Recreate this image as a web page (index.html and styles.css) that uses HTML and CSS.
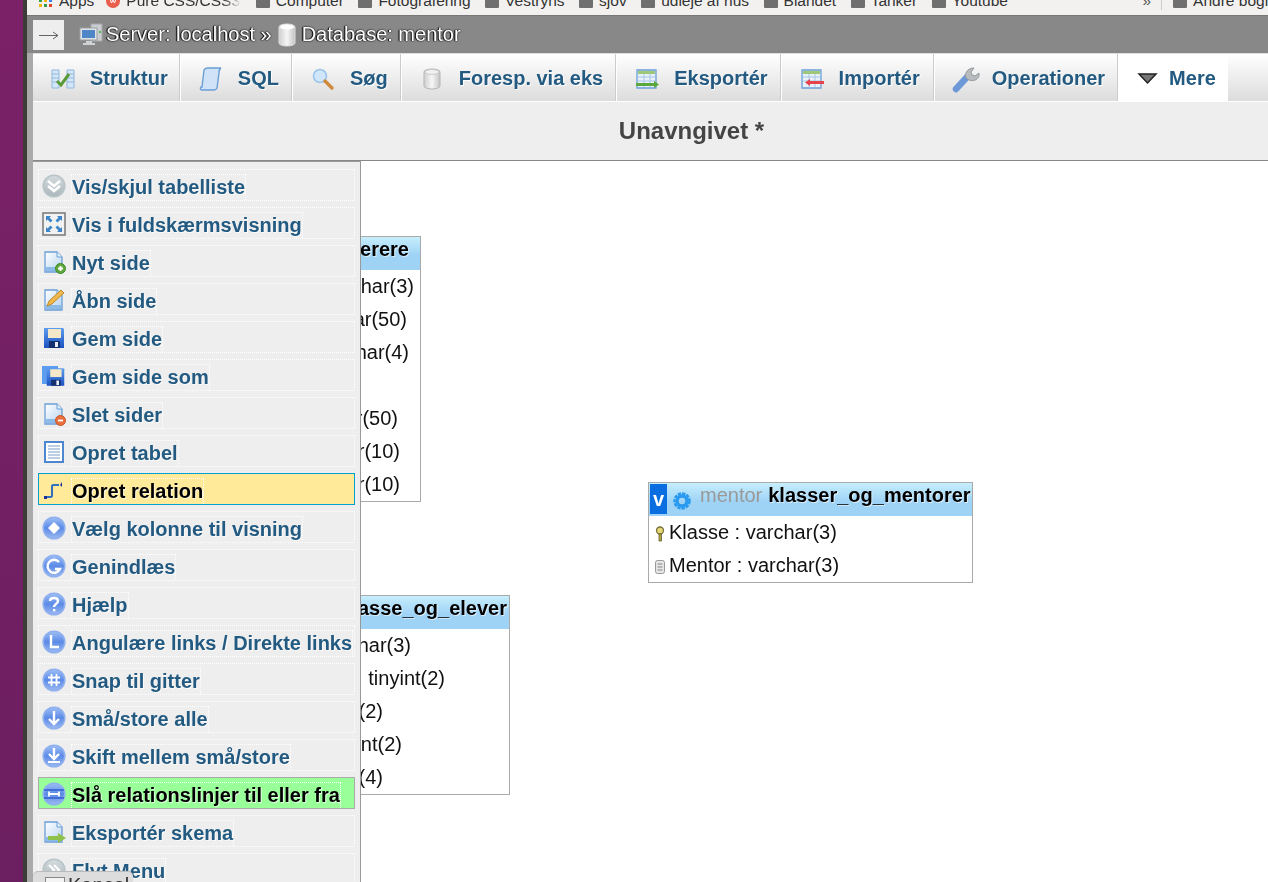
FILE: index.html
```html
<!DOCTYPE html>
<html lang="da">

<head>
    <meta charset="UTF-8">
    <meta name="viewport" content="width=device-width, initial-scale=1.0">
    <title>Designer - mentor</title>
    <link rel="stylesheet" href="styles.css">
</head>

<body>
    <svg class="defs" aria-hidden="true">
        <defs>
            <linearGradient id="g-blue" x1="0" y1="0" x2="0" y2="1">
                <stop offset="0" stop-color="#9fc0f5" />
                <stop offset="0.5" stop-color="#5b8ae6" />
                <stop offset="1" stop-color="#9db9f2" />
            </linearGradient>
            <linearGradient id="g-gray" x1="0" y1="0" x2="0" y2="1">
                <stop offset="0" stop-color="#d5dcdf" />
                <stop offset="1" stop-color="#a9b6bb" />
            </linearGradient>
            <linearGradient id="g-page" x1="0" y1="0" x2="1" y2="1">
                <stop offset="0" stop-color="#ffffff" />
                <stop offset="1" stop-color="#b4d2f0" />
            </linearGradient>
            <linearGradient id="g-disk" x1="0" y1="0" x2="0" y2="1">
                <stop offset="0" stop-color="#5d9df0" />
                <stop offset="1" stop-color="#1a50c0" />
            </linearGradient>
            <linearGradient id="g-can" x1="0" y1="0" x2="1" y2="0">
                <stop offset="0" stop-color="#cfcfcf" />
                <stop offset="0.5" stop-color="#f6f6f6" />
                <stop offset="1" stop-color="#c4c4c4" />
            </linearGradient>
            <symbol id="round-blue" viewBox="0 0 24 24">
                <circle cx="12" cy="12" r="10.8" fill="url(#g-blue)" stroke="#8fb0ee" stroke-width="1.6" />
            </symbol>
            <symbol id="round-gray" viewBox="0 0 24 24">
                <circle cx="12" cy="12" r="10.8" fill="url(#g-gray)" stroke="#b9c4c8" stroke-width="1.6" />
            </symbol>
            <symbol id="page" viewBox="0 0 24 24">
                <path d="M3 2h12l5 5v15H3z" fill="url(#g-page)" stroke="#6b9fd8" stroke-width="1.3" />
                <path d="M15 2v5h5" fill="#e8f2fb" stroke="#6b9fd8" />
                <path d="M4 17h15v4H4z" fill="#8dbbe8" />
            </symbol>
            <symbol id="disk" viewBox="0 0 24 24">
                <path d="M2 2h19l1 1v19H2z" fill="url(#g-disk)" />
                <path d="M6 3h13v9H6z" fill="#f5e8c8" />
                <path d="M7 15h11v7H7z" fill="#16306e" />
                <path d="M13 16h3v5h-3z" fill="#e8eef8" />
            </symbol>
        </defs>
    </svg>

    <div class="screen">
        <div class="wallpaper"></div>
        <div class="window">
            <div class="bookmarks">
                <span class="mark mark-apps">
                    <svg class="mark-icon" viewBox="0 0 14 14">
                        <path d="M0 0h3v3H0z" fill="#e0442f" />
                        <path d="M5 0h3v3H5z" fill="#3b82ea" />
                        <path d="M10 0h3v3h-3z" fill="#e0442f" />
                        <path d="M0 5h3v3H0z" fill="#2f9e4f" />
                        <path d="M5 5h3v3H5z" fill="#f2b50f" />
                        <path d="M10 5h3v3h-3z" fill="#3b82ea" />
                        <path d="M0 10h3v3H0z" fill="#f2b50f" />
                        <path d="M5 10h3v3H5z" fill="#2f9e4f" />
                        <path d="M10 10h3v3h-3z" fill="#e0442f" />
                    </svg>Apps</span>
                <span class="mark mark-pure">
                    <svg class="mark-icon" viewBox="0 0 14 14">
                        <circle cx="7" cy="7" r="7" fill="#e8604c" />
                        <path d="M4 5l1.500 4L7 6l1.500 3L10 5" fill="none" stroke="#fff" />
                    </svg><span class="mark-fade">Pure CSS/CSS3 O</span></span>
                <span class="mark"><i class="folder"></i>Computer</span>
                <span class="mark"><i class="folder"></i>Fotografering</span>
                <span class="mark"><i class="folder"></i>Vestryns</span>
                <span class="mark"><i class="folder"></i>sjov</span>
                <span class="mark"><i class="folder"></i>udleje af hus</span>
                <span class="mark"><i class="folder"></i>Blandet</span>
                <span class="mark"><i class="folder"></i>Tanker</span>
                <span class="mark"><i class="folder"></i>Youtube</span>
                <span class="mark-more">»</span>
                <span class="mark mark-other"><i class="folder"></i>Andre bogmærker</span>
            </div>

            <div class="page">
                <div class="collapse-strip"></div>
                <div class="content">
                    <div class="serverbar">
                        <span class="arrow-box">
                            <svg class="arrow-icon" viewBox="0 0 31 30">
                                <path d="M6 15.500h19M20 12l5 3.500-5 3.500" fill="none" stroke="#666" />
                            </svg>
                        </span>
                        <svg class="server-icon" viewBox="0 0 24 24">
                            <path d="M12 1h11v17H12z" fill="#c9cdd0" stroke="#a5a9ad" />
                            <path d="M1 5h17v12H1z" fill="#dfe3e6" stroke="#9a9fa3" />
                            <path d="M3 7h13v8H3z" fill="#4f86c8" />
                            <path d="M7 18h6v2h3v2H4v-2h3z" fill="#d0d3d6" />
                            <path d="M20 8h2v2h-2z" fill="#58b858" />
                        </svg>
                        <span class="crumb">Server: localhost »</span>
                        <svg class="crumb-db" viewBox="0 0 18 24">
                            <path d="M1 4c0-4 16-4 16 0v16c0 4-16 4-16 0z" fill="url(#g-can)" stroke="#ddd" />
                            <ellipse cx="9" cy="4" rx="7" ry="2.4" fill="#fff" />
                        </svg>
                        <span class="crumb">Database: mentor</span>
                    </div>

                    <nav class="tabs">
                        <a class="tab">
                            <svg class="tab-icon" viewBox="0 0 24 24">
                                <path d="M1 3h7v18H1zM16 3h7v18h-7z" fill="#d5e6f6" stroke="#8fb8e0" />
                                <path d="M1 7h7M1 11h7M1 15h7M16 7h7M16 11h7M16 15h7" stroke="#8fb8e0" />
                                <path d="M6 14l4 4 8-11" fill="none" stroke="#5a9a38" stroke-width="3" />
                            </svg>Struktur</a>
                        <a class="tab">
                            <svg class="tab-icon" viewBox="0 0 24 24">
                                <path d="M5 3c1-2 3-2 4-2h13c-2 1-2 3-2 5l-2 15c-1 2-2 2-3 2H3c-2 0-2-2-1-3h1z" fill="#cfe2f7" stroke="#6b9fd8" stroke-width="1.4" />
                            </svg>SQL</a>
                        <a class="tab">
                            <svg class="tab-icon" viewBox="0 0 24 24">
                                <circle cx="9" cy="9" r="6.500" fill="#cfe6fb" stroke="#9cc3e8" stroke-width="1.6" />
                                <path d="M14 14l7 7" stroke="#d08a3c" stroke-width="3.4" stroke-linecap="round" />
                            </svg>Søg</a>
                        <a class="tab">
                            <svg class="tab-icon" viewBox="0 0 24 24">
                                <path d="M4 5c0-4 16-4 16 0v14c0 4-16 4-16 0z" fill="url(#g-can)" stroke="#b5b5b5" />
                                <ellipse cx="12" cy="5" rx="7" ry="2.4" fill="#f2f2f2" stroke="#c8c8c8" />
                            </svg>Foresp. via eks</a>
                        <a class="tab">
                            <svg class="tab-icon" viewBox="0 0 24 24">
                                <path d="M2 3h19v18H2z" fill="#e8f1fa" stroke="#6b9fd8" stroke-width="1.3" />
                                <path d="M3 4h17v3H3z" fill="#9cc878" />
                                <path d="M3 10h17M3 14h17M9 7v13M15 7v13" stroke="#a9c6e4" />
                                <path d="M1 16h18v-2l5 3.500-5 3.500v-2H1z" fill="#5aa83c" />
                            </svg>Eksportér</a>
                        <a class="tab tab-wide">
                            <svg class="tab-icon" viewBox="0 0 24 24">
                                <path d="M2 3h19v18H2z" fill="#e8f1fa" stroke="#6b9fd8" stroke-width="1.3" />
                                <path d="M3 4h17v3H3z" fill="#9cc878" />
                                <path d="M3 10h17M3 14h17M9 7v13M15 7v13" stroke="#a9c6e4" />
                                <path d="M24 14H10v-2l-5 3.500 5 3.500v-2h14z" fill="#e8434c" />
                            </svg>Importér</a>
                        <a class="tab">
                            <svg class="tab-icon" viewBox="0 0 24 24">
                                <path d="M3 22L15 9" stroke="#6c98d8" stroke-width="6.500" stroke-linecap="round" />
                                <path d="M13 11c-2-5 2-10 8-10l-3 4 1 3 3 1 4-3c1 6-5 9-10 7z" fill="#b8bcbf" stroke="#97999b" />
                            </svg>Operationer</a>
                        <a class="tab tab-more">
                            <svg class="tab-icon" viewBox="0 0 24 24">
                                <path d="M2 7h17l-8.500 9z" fill="#777" stroke="#222" stroke-width="1.500" />
                            </svg>Mere</a>
                    </nav>

                    <h1 class="page-title">Unavngivet *</h1>

                    <div class="canvas">
                        <section class="db-table table-teachers">
                            <header class="db-head">
                                <span class="db-v">v</span>
                                <svg class="db-gear" viewBox="0 0 20 20">
                                    <circle cx="10" cy="10" r="7.500" fill="none" stroke="#2a9af0" stroke-width="2.500" stroke-dasharray="3.400 1" />
                                    <circle cx="10" cy="10" r="5" fill="none" stroke="#2a9af0" stroke-width="3.500" />
                                </svg>
                                <span class="db-name">mentor</span>
                                <span class="db-title">lærerere</span>
                            </header>
                            <div class="db-row end-6">Initialer : varchar(3)</div>
                            <div class="db-row end-13">Fornavn : varchar(50)</div>
                            <div class="db-row end-11">Lokale : varchar(4)</div>
                            <div class="db-row end-69">Aktiv : int</div>
                            <div class="db-row end-22">Efternavn : varchar(50)</div>
                            <div class="db-row end-20">Telefon : varchar(10)</div>
                            <div class="db-row end-20">Mobil : varchar(10)</div>
                        </section>

                        <section class="db-table table-pupils">
                            <header class="db-head">
                                <span class="db-v">v</span>
                                <span class="db-name">mentor</span>
                                <span class="db-title">klasse_og_elever</span>
                            </header>
                            <div class="db-row end-98">Klasse : varchar(3)</div>
                            <div class="db-row end-64">Nummer : tinyint(2)</div>
                            <div class="db-row end-126">Elev : int(2)</div>
                            <div class="db-row end-107">Hold : tinyint(2)</div>
                            <div class="db-row end-126">Aar : year(4)</div>
                        </section>

                        <section class="db-table table-mentors">
                            <header class="db-head">
                                <span class="db-v">v</span>
                                <svg class="db-gear" viewBox="0 0 20 20">
                                    <circle cx="10" cy="10" r="7.500" fill="none" stroke="#2a9af0" stroke-width="2.500" stroke-dasharray="3.400 1" />
                                    <circle cx="10" cy="10" r="5" fill="none" stroke="#2a9af0" stroke-width="3.500" />
                                </svg>
                                <span class="db-name">mentor</span>
                                <span class="db-title">klasser_og_mentorer</span>
                            </header>
                            <div class="db-row">
                                <svg class="db-col-icon" viewBox="0 0 12 16">
                                    <circle cx="6" cy="4.500" r="3.500" fill="#e6d777" stroke="#77703a" stroke-width="1.300" />
                                    <path d="M5 8h2.500v7H5z" fill="#b5a63e" stroke="#5f5a2e" stroke-width="0.800" />
                                </svg>Klasse : varchar(3)
                            </div>
                            <div class="db-row">
                                <svg class="db-col-icon" viewBox="0 0 12 16">
                                    <rect x="1.500" y="1.500" width="9" height="13" rx="2" fill="#e6e6e6" stroke="#999" />
                                    <path d="M3.500 5h5M3.500 8h5M3.500 11h5" stroke="#888" />
                                </svg>Mentor : varchar(3)
                            </div>
                        </section>

                        <aside class="side-menu">
                            <a class="menu-item"><svg class="menu-icon" viewBox="0 0 24 24"><use href="#round-gray" /><path d="M6 7l6 5 6-5M6 12l6 5 6-5" fill="none" stroke="#fff" stroke-width="2.600" /></svg><span class="menu-text">Vis/skjul tabelliste</span></a>
                            <a class="menu-item"><svg class="menu-icon" viewBox="0 0 24 24"><path d="M1 1h22v22H1z" fill="#f2f2f2" stroke="#777" stroke-width="1.500" /><path d="M4 4h5L7.500 5.500l3 3-2 2-3-3L4 9zM20 4v5l-1.500-1.500-3 3-2-2 3-3L15 4zM4 20v-5l1.500 1.500 3-3 2 2-3 3L9 20zM20 20h-5l1.500-1.500-3-3 2-2 3 3L20 15z" fill="#3f86c8" /></svg><span class="menu-text">Vis i fuldskærmsvisning</span></a>
                            <a class="menu-item"><svg class="menu-icon" viewBox="0 0 24 24"><use href="#page" /><circle cx="18.500" cy="18.500" r="5" fill="#5fa83c" stroke="#3c8a2a" /><path d="M16 18.500h5M18.500 16v5" stroke="#fff" stroke-width="1.800" /></svg><span class="menu-text">Nyt side</span></a>
                            <a class="menu-item"><svg class="menu-icon" viewBox="0 0 24 24"><use href="#page" /><path d="M5 18l2-5L19 2l3 3L10 16z" fill="#f0b84a" stroke="#b98a30" /></svg><span class="menu-text">Åbn side</span></a>
                            <a class="menu-item"><svg class="menu-icon" viewBox="0 0 24 24"><use href="#disk" /></svg><span class="menu-text">Gem side</span></a>
                            <a class="menu-item"><svg class="menu-icon" viewBox="0 0 24 24"><path d="M0 2h16v18H0z" fill="#5d9df0" /><svg x="3" y="2" width="21" height="22" viewBox="0 0 24 24"><use href="#disk" /></svg></svg><span class="menu-text">Gem side som</span></a>
                            <a class="menu-item"><svg class="menu-icon" viewBox="0 0 24 24"><use href="#page" /><circle cx="18.500" cy="18.500" r="5" fill="#e8703c" stroke="#c9552a" /><path d="M16 18.500h5" stroke="#fff" stroke-width="1.800" /></svg><span class="menu-text">Slet sider</span></a>
                            <a class="menu-item"><svg class="menu-icon" viewBox="0 0 24 24"><path d="M3 2h18v20H3z" fill="#fff" stroke="#4f86d0" stroke-width="2" /><path d="M6 6h12M6 9h12M6 12h12M6 15h12M6 18h12" stroke="#a5bfdc" stroke-width="1.300" /></svg><span class="menu-text">Opret tabel</span></a>
                            <a class="menu-item item-active"><svg class="menu-icon" viewBox="0 0 24 24"><path d="M4 19h5l1-1V8l1-1h6" fill="none" stroke="#2f6fbd" stroke-width="2" /><path d="M2 18h3v3H2z" fill="#1c2f9c" /><path d="M20 4l-2 3 2 2z" fill="#1c2f9c" /></svg><span class="menu-text">Opret relation</span></a>
                            <a class="menu-item"><svg class="menu-icon" viewBox="0 0 24 24"><use href="#round-blue" /><path d="M12 6l6 6-6 6-6-6z" fill="#fff" /></svg><span class="menu-text">Vælg kolonne til visning</span></a>
                            <a class="menu-item"><svg class="menu-icon" viewBox="0 0 24 24"><use href="#round-blue" /><path d="M17 8a6.500 6.500 0 1 0 1 7h-5" fill="none" stroke="#fff" stroke-width="2.400" /></svg><span class="menu-text">Genindlæs</span></a>
                            <a class="menu-item"><svg class="menu-icon" viewBox="0 0 24 24"><use href="#round-blue" /><path d="M8 9c0-4 8-4 8 0 0 3-4 3-4 6" fill="none" stroke="#fff" stroke-width="2.400" /><path d="M11 17h2.400v2.400H11z" fill="#fff" /></svg><span class="menu-text">Hjælp</span></a>
                            <a class="menu-item"><svg class="menu-icon" viewBox="0 0 24 24"><use href="#round-blue" /><path d="M9 5v12h8" fill="none" stroke="#fff" stroke-width="2.400" /></svg><span class="menu-text">Angulære links / Direkte links</span></a>
                            <a class="menu-item"><svg class="menu-icon" viewBox="0 0 24 24"><use href="#round-blue" /><path d="M9.500 6v12M14.500 6v12M6 9.500h12M6 14.500h12" stroke="#fff" stroke-width="1.800" /></svg><span class="menu-text">Snap til gitter</span></a>
                            <a class="menu-item"><svg class="menu-icon" viewBox="0 0 24 24"><use href="#round-blue" /><path d="M12 5v13M7 13l5 5 5-5" fill="none" stroke="#fff" stroke-width="2.400" /></svg><span class="menu-text">Små/store alle</span></a>
                            <a class="menu-item"><svg class="menu-icon" viewBox="0 0 24 24"><use href="#round-blue" /><path d="M12 4v10M7 10l5 5 5-5" fill="none" stroke="#fff" stroke-width="2.400" /><path d="M6 18h12" stroke="#fff" stroke-width="2" /></svg><span class="menu-text">Skift mellem små/store</span></a>
                            <a class="menu-item item-lines"><svg class="menu-icon" viewBox="0 0 24 24"><use href="#round-blue" /><path d="M2 8h20M2 16h20" stroke="#2f5fd0" stroke-width="1.500" /><path d="M7 12h10M7 9.500v5M17 9.500v5" fill="none" stroke="#fff" stroke-width="1.800" /></svg><span class="menu-text">Slå relationslinjer til eller fra</span></a>
                            <a class="menu-item"><svg class="menu-icon" viewBox="0 0 24 24"><use href="#page" /><path d="M6 16h10v-3l8 5-8 5v-3H6z" fill="#8fc04a" /></svg><span class="menu-text">Eksportér skema</span></a>
                            <a class="menu-item"><svg class="menu-icon" viewBox="0 0 24 24"><use href="#round-gray" /><path d="M7 7l5 5-5 5M12 7l5 5-5 5" fill="none" stroke="#fff" stroke-width="2.400" /></svg><span class="menu-text">Flyt Menu</span></a>
                        </aside>

                        <div class="console-tab">
                            <span class="console-box"></span>Kancel
                        </div>
                    </div>
                </div>
            </div>
        </div>
    </div>
</body>

</html>
```
FILE: styles.css
```css
html,
body {
    margin: 0;
    height: 100%;
    overflow: hidden;
}

body {
    font-family: "Liberation Sans", Arial, sans-serif;
    background-color: #fff;
}

.defs {
    position: absolute;
    width: 0;
    height: 0;
}

.screen {
    display: flex;
    height: 882px;
}

.wallpaper {
    width: 23px;
    background: linear-gradient(#7a2168, #6c1f60);
}

.window {
    flex: 1;
    min-width: 0;
    display: flex;
    flex-direction: column;
    border-left: 4px solid #3c3b37;
}

/* bookmarks bar, cut off at the top of the shot */
.bookmarks {
    height: 15px;
    flex: none;
    display: flex;
    align-items: flex-end;
    overflow: hidden;
    background-color: #f2f1ef;
    color: #333;
    font-size: 15.5px;
    white-space: nowrap;
}

.mark {
    display: flex;
    align-items: center;
    gap: 6px;
    line-height: 18px;
    margin-bottom: 5px;
    padding-right: 14.5px;
    flex: none;
}

.mark-apps {
    margin-left: 12px;
    padding-right: 12px;
}

.mark-fade {
    width: 115px;
    overflow: hidden;
    -webkit-mask-image: linear-gradient(to right, #000 85%, transparent);
    mask-image: linear-gradient(to right, #000 85%, transparent);
}

.mark-icon {
    width: 14px;
    height: 14px;
    flex: none;
}

.folder {
    width: 14px;
    height: 13px;
    background-color: #6f6f6f;
    border-radius: 1px;
    flex: none;
}

.mark-more {
    margin-left: 120px;
    margin-bottom: 5px;
    line-height: 18px;
    padding-right: 10px;
    border-right: 1px solid #ccc;
    color: #555;
}

.mark-other {
    margin-left: 11px;
}

.page {
    flex: 1;
    min-height: 0;
    display: flex;
    filter: blur(0.35px);
}

.collapse-strip {
    width: 6px;
    background-color: #aaa;
    flex: none;
}

.content {
    flex: 1;
    min-width: 0;
    display: flex;
    flex-direction: column;
}

.serverbar {
    height: 38px;
    flex: none;
    display: flex;
    align-items: center;
    background-color: #888;
    border-top: 1px solid #777;
    box-sizing: border-box;
    color: #fff;
    font-size: 20px;
    text-shadow: 0 0 2px #000, -1px 0 1px #000;
    margin-left: -6px;
    padding-left: 6px;
}

.arrow-box {
    width: 31px;
    height: 30px;
    flex: none;
    background-color: #eee;
}

.arrow-icon {
    display: block;
    width: 31px;
    height: 30px;
}

.server-icon {
    width: 24px;
    height: 24px;
    margin-left: 15px;
    margin-right: 3px;
    flex: none;
}

.crumb {
    flex: none;
}

.crumb-db {
    width: 18px;
    height: 24px;
    margin-left: 6px;
    margin-right: 6px;
    flex: none;
}

.tabs {
    height: 49px;
    flex: none;
    display: flex;
    background: linear-gradient(#fff, #dcdcdc);
    border-top: 1px solid #ddd;
    border-bottom: 1px solid #fff;
    box-sizing: border-box;
}

.tab {
    display: flex;
    align-items: center;
    padding: 2px 13px 0 18px;
    border-right: 1px solid #fff;
    box-shadow: inset -1px 0 0 #ccc;
    color: #235a81;
    font-size: 20px;
    font-weight: bold;
    text-shadow: 1px 1px 0 #fff;
}

.tab:first-child {
    padding-right: 12px;
}

.tab-wide {
    padding-right: 14px;
}

.tab-icon {
    width: 24px;
    height: 24px;
    margin-right: 15px;
    flex: none;
    overflow: visible;
}

.tab-more {
    background-color: #fff;
    border-right: none;
    box-shadow: none;
    padding-right: 12px;
}

.tab-more .tab-icon {
    margin-right: 8px;
}

.page-title {
    height: 59px;
    flex: none;
    margin: 0;
    padding-left: 82px;
    box-sizing: border-box;
    background-color: #eee;
    border-bottom: 1px solid #888;
    color: #444;
    font-size: 24px;
    line-height: 57px;
    text-align: center;
}

.canvas {
    flex: 1;
    min-height: 0;
    position: relative;
    overflow: hidden;
    background-color: #fff;
}

/* tables sit on the designer canvas */
.db-table {
    position: absolute;
    box-sizing: border-box;
    border: 1px solid #aaa;
    background-color: #fff;
    color: #111;
    font-size: 20px;
}

.table-teachers {
    left: 147px;
    top: 75px;
    width: 241px;
}

.table-pupils {
    left: 147px;
    top: 434px;
    width: 330px;
}

.table-mentors {
    left: 615px;
    top: 321px;
    width: 325px;
}

.db-head {
    height: 33px;
    box-sizing: border-box;
    display: flex;
    align-items: center;
    justify-content: flex-end;
    padding-right: 2px;
    padding-bottom: 8px;
    background: linear-gradient(#c6eefc, #9fd3f6 55%);
    white-space: nowrap;
}

.table-teachers .db-head {
    padding-right: 11px;
}

.db-v {
    width: 17px;
    height: 30px;
    margin: 1px 5px 0 0;
    align-self: flex-start;
    flex: none;
    background-color: #0b6ee0;
    color: #fff;
    font-weight: bold;
    line-height: 30px;
    text-align: center;
}

.db-gear {
    width: 20px;
    height: 20px;
    margin: 8px 8px 0 0;
    align-self: flex-start;
    flex: none;
}

.db-name {
    margin-right: 6px;
    color: #999;
}

.db-title {
    color: #000;
    font-weight: bold;
    text-shadow: 1px 1px 0 rgba(255, 255, 255, 0.6);
}

.db-row {
    height: 33px;
    line-height: 33px;
    text-align: right;
    white-space: nowrap;
}

.table-mentors .db-head {
    justify-content: flex-start;
    padding-left: 1px;
}

.table-mentors .db-row {
    display: flex;
    align-items: center;
    text-align: left;
    padding-left: 5px;
}

.db-col-icon {
    width: 12px;
    height: 16px;
    margin: 2px 3px 0 0;
    flex: none;
}

.end-6 { padding-right: 6px; }
.end-11 { padding-right: 11px; }
.end-13 { padding-right: 13px; }
.end-20 { padding-right: 20px; }
.end-22 { padding-right: 22px; }
.end-64 { padding-right: 64px; }
.end-69 { padding-right: 69px; }
.end-98 { padding-right: 98px; }
.end-107 { padding-right: 107px; }
.end-126 { padding-right: 126px; }

/* floating designer menu */
.side-menu {
    position: absolute;
    left: 0;
    top: 0;
    width: 328px;
    height: 740px;
    box-sizing: border-box;
    padding: 7px 5px 0;
    display: flex;
    flex-direction: column;
    gap: 6px;
    background-color: #eee;
    border-top: 1px solid #999;
    border-right: 1px solid #999;
}

.menu-item {
    height: 32px;
    flex: none;
    box-sizing: border-box;
    display: flex;
    align-items: flex-end;
    padding-left: 3px;
    border: 1px dotted #fff;
    color: #235a81;
    font-size: 20px;
    font-weight: bold;
    white-space: nowrap;
}

.menu-icon {
    width: 24px;
    height: 24px;
    margin: 0 5px 2px 0;
    flex: none;
}

.menu-text {
    height: 26px;
    box-sizing: border-box;
    border: 1px dotted #fff;
    border-bottom: none;
    line-height: 24px;
    text-shadow: 1px 1px 0 rgba(255, 255, 255, 0.7);
}

.item-active {
    background-color: #ffea99;
    border: 1px solid #00a0d0;
    color: #000;
}

.item-lines {
    background-color: #9f9;
    border: 1px solid #aaa;
    color: #000;
}

.console-tab {
    position: absolute;
    left: 0;
    top: 711px;
    width: 100px;
    height: 30px;
    box-sizing: border-box;
    padding: 1px 0 0 12px;
    display: flex;
    align-items: flex-start;
    background-color: #ddd;
    border-radius: 5px 5px 0 0;
    box-shadow: 0 -1px 0 #bbb;
    color: #333;
    font-size: 20px;
    line-height: 24px;
}

.console-box {
    width: 20px;
    height: 20px;
    box-sizing: border-box;
    margin: 4px 3px 0 0;
    background-color: #f4f4f4;
    border: 1px solid #888;
    flex: none;
}
```
